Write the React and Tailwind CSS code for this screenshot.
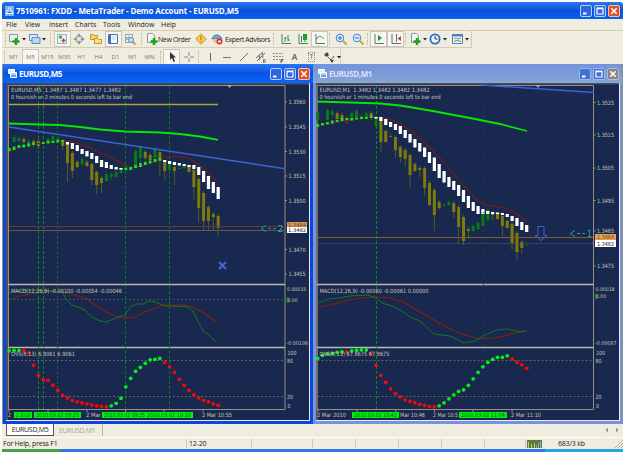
import React from 'react';

const timeframes = ['M1', 'M5', 'M15', 'M30', 'H1', 'H4', 'D1', 'W1', 'MN'];
const menus = [
  { label: 'File', width: 'w-[19px]' },
  { label: 'View', width: 'w-[24px]' },
  { label: 'Insert', width: 'w-[26px]' },
  { label: 'Charts', width: 'w-[28px]' },
  { label: 'Tools', width: 'w-[25px]' },
  { label: 'Window', width: 'w-[33px]' },
  { label: 'Help', width: 'w-[24px]' }
];

const STEP = 4.86;

// Candles: [index, top, bottom, wick end, bullish]
const leftChart = {
  left: 9,
  axis: 285,
  right: 309,
  title: 'EURUSD,M5  1.3487 1.3487 1.3477 1.3482',
  timer: '0 hoursish or 2 minutes 0 seconds left to bar end',
  timerWidth: 121,
  prices: [['1.3560', 102], ['1.3545', 127], ['1.3530', 151.5], ['1.3515', 176], ['1.3500', 200.5], ['1.3470', 249.5], ['1.3455', 274]],
  ma: '9,123.5 40,124.5 60,125 80,127 100,129.5 125,131.5 160,132.5 180,134 200,136.5 218,139.8',
  trend: [9, 127, 285, 168.7],
  band: '9,152 20,147 35,144 50,142 62,140.5 70,141 80,144 90,148 100,153 110,157 118,161 128,166.5 135,167.5 145,165 155,162 160,159 166,157 174,156 184,157 192,160 200,166 208,173 217,181',
  candles: [
    [1, 137, 142, 142, 1], [2, 138, 141, 143, 1], [3, 139, 142, 144, 0], [4, 141, 144, 147, 1], [5, 141, 145, 147, 0], [6, 141, 146, 148, 0], [8, 139, 143, 145, 1], [9, 136, 142, 143, 1],
    [10, 138, 141, 142, 1], [11, 141, 146, 150, 0], [12, 144, 163, 182, 0], [13, 153, 171, 178, 0], [14, 162, 167, 168, 0], [15, 159, 164, 166, 1], [16, 162, 166, 167, 0],
    [17, 164, 180, 185, 0], [18, 172, 185, 194, 0], [19, 178, 183, 193, 0], [20, 174, 181, 182, 1], [21, 174, 177, 180, 1], [22, 172, 177, 178, 1],
    [23, 169, 173, 174, 1], [24, 166, 170, 172, 1], [26, 151, 166, 167, 1], [27, 147, 158, 164, 1], [28, 152, 158, 163, 0], [29, 155, 160, 162, 0], [30, 149, 158, 162, 1], [31, 152, 161, 176, 0],
    [32, 162, 171, 180, 0], [33, 164, 170, 171, 1], [34, 167, 171, 185, 0], [35, 168, 169, 169, 1], [36, 166, 168, 169, 1], [37, 167, 172, 173, 0],
    [38, 170, 187, 200, 0], [39, 179, 208, 223, 0], [40, 193, 221, 231, 0], [41, 207, 221, 231, 0], [42, 214, 217, 230, 0], [43, 216, 228, 237, 0]
  ],
  smoothStart: 12,
  smooth: [
    [142, 144.5], [143, 149], [145, 151], [149, 154], [151, 156.5], [153, 159], [156, 163], [160, 167], [162, 168], [165, 169], [167, 169.5], [168, 169.5],
    null, null, null, null, null, null, null, null, [160, 162], [161, 164], [162, 165], [163, 165.5], [164, 166], [165, 167], [165, 169], [167, 175], [171, 182], [176, 189], [182, 193], [187, 199]
  ],
  greens: [
    [0, 148, 151], [1, 146.5, 150], [2, 145, 148], [3, 144.5, 147.5], [4, 143.5, 146.5], [5, 143, 145], [7, 142, 144], [8, 141, 143.5], [9, 141, 143], [10, 140, 142.5], [11, 140, 142],
    [24, 168, 170], [25, 167, 170], [26, 165, 168], [27, 163, 167], [28, 162, 165], [29, 160.5, 163.5], [30, 159, 162], [31, 158, 160.5]
  ],
  verticals: [[38.5, '#0a8a18'], [43.5, '#0a8a18'], [57.5, '#175f33'], [125.5, '#0a7a20'], [169.5, '#0a7a20']],
  macdTitle: 'MACD(12,26,9) -0.00100 -0.00054 -0.00046',
  macdWidth: 111,
  macdTop: '0.00033',
  macdTopY: 289,
  macdZeroY: 299.5,
  macdLow: '-0.00106',
  macdGreen: '9,293 18,291 40,290 57,291.5 62,291 66,299 72,305 78,307 85,310 92,317 100,321 106,322 113,319 125,315 130,307 137,304 143,304 149,301 155,302 165,306 187,306.5 193,311 196,317 203,331 209,335 216,342',
  macdRed: '11,299 20,296 35,293 50,291 62,292 75,295 87,299 97,306 106,312 115,316 125,318.5 135,317 145,312 155,308 165,305 185,305 195,308 205,314 217,322',
  ossTitle: 'OSS(8,13) 6.9061 6.9061',
  ossWidth: 64,
  oss: [
    350.5, 350, 350, -350, -352.5, -365, -375, -379.5, -380, -385, -390, -395, -397.5, -400, -401.5, -402.5, -403.5, -404.5, -405.5, -406, -406.5,
    405.5, 403, 398, 386.5, 378, 371, 367, 363, 359.5, 359, 358, -362, -366.5, -372, -379, -385, -390, -394.5, -397.5, -400, -401.5, -403.5, -405
  ],
  ticks: [9, 48, 87, 125.5, 164, 203],
  times: [['2', 8, 3], ['2 Mar', 86, 15], ['2 Mar 10:55', 202, 30]],
  marks: [['2 2010', 14, 18], ['2010.03.02 08:25', 34, 47], ['2010.03.02 09:25', 102, 45], ['2010.03.02 10:20', 145, 48]]
};

const rightChart = {
  left: 317.5,
  axis: 593.5,
  right: 618,
  title: 'EURUSD,M1  1.3482 1.3482 1.3482 1.3482',
  timer: '0 hoursish or 1 minutes 0 seconds left to bar end',
  timerWidth: 121,
  prices: [['1.3525', 102.5], ['1.3515', 135], ['1.3505', 168], ['1.3495', 200.5], ['1.3485', 231], ['1.3475', 266]],
  ma: '317,101.5 350,102.5 380,103.5 400,105.5 430,110.5 470,118 500,124 527,131',
  trend: [481, 85, 594, 92.5],
  band: '317,125 340,122 360,118.5 375,116.5 390,119 400,124 415,134 430,148 440,158 450,170 468,190 475,198 480,202 490,206 503,207.5 513,211 522,218 527,222',
  candles: [
    [0, 112, 120, 122, 1], [2, 110, 120, 121, 1], [3, 111, 115, 118, 1], [4, 113, 119, 122, 0], [5, 115, 119, 120, 0], [6, 118, 121, 124, 0], [7, 113, 118, 120, 1], [8, 111, 119, 120, 1], [9, 116, 118, 121, 1], [10, 113, 117, 119, 1], [11, 113, 117, 120, 0],
    [12, 117, 126, 127, 1], [13, 119, 142, 152, 0], [14, 131, 142, 143, 0], [15, 136, 137, 137, 0], [16, 137, 150, 158, 0], [17, 147, 157, 163, 0], [18, 150, 159, 167, 0], [19, 155, 175, 187, 0], [20, 164, 171, 172, 0],
    [21, 168, 170, 177, 0], [22, 168, 188, 196, 0], [23, 183, 205, 206, 0], [24, 190, 215, 231, 0], [25, 202, 208, 210, 0], [26, 205, 206, 206, 1], [27, 202, 205, 206, 1], [28, 203, 212, 218, 0], [29, 207, 227, 244, 0],
    [30, 217, 241, 245, 0], [31, 229, 231, 239, 0], [32, 226, 231, 232, 1], [33, 223, 229, 230, 1], [34, 212, 226, 227, 1], [35, 210, 220, 222, 1], [36, 213, 215, 221, 0], [37, 214, 219, 220, 0], [38, 216, 226, 236, 0],
    [39, 221, 228, 229, 0], [40, 224, 243, 250, 0], [41, 233, 252, 260, 0], [42, 242, 248, 254, 0], [43, 244.5, 245.5, 245, 1]
  ],
  smoothStart: 12,
  smooth: [
    [117, 118.5], [117, 121], [119, 125], [122, 127], [124, 130], [126, 134], [130, 138], [134, 142.5], [139, 147.5], [143, 151.5], [147.5, 157], [152, 163], [157.5, 171], [164, 178], [171, 182.5], [177, 187], [181, 190], [185, 196],
    [190, 202], [196, 208], [202, 211], [206, 214], [209, 214], [211, 214], [212, 214], [212.5, 214], [213, 215], [214, 217], [216, 221], [218, 226], [222, 230], [225, 232]
  ],
  greens: [[0, 124, 127], [1, 123, 125.5], [2, 122, 124.5], [3, 120.5, 123.5], [4, 120, 122], [5, 118, 121], [6, 118, 120], [7, 118, 120.5], [8, 118, 119.5], [9, 117, 119], [10, 117, 119], [11, 115.5, 118]],
  verticals: [[376.5, '#0a8a18']],
  macdTitle: 'MACD(12,26,9) -0.00060 -0.00061 0.00000',
  macdWidth: 109,
  macdTop: '0.00018',
  macdTopY: 289,
  macdZeroY: 296,
  macdLow: '-0.00087',
  macdGreen: '318,303 328,299 340,298 350,296 368,295 376,298 382,303 395,307 405,313 410,317 420,321 434,334 450,336 464,343 475,341 480,338 485,335 497,330 507,329 516,331 520,332 526,331',
  macdRed: '318,307 330,305 345,301 360,298 375,297 390,298 403,302 415,309 434,320 450,329 465,335 480,339 495,338 508,335 518,332 527,331',
  ossTitle: 'OSS(8,13) 67.8675 67.8675',
  ossWidth: 70,
  oss: [
    358, 355, 353.5, 353, 352, 351.5, -351.5, 350.5, 350, 349.5, 349.5, -353, -365, -375, -382, -388.5, -393, -396.5, -399.5, -401, -402.5, -404, -405, -406, -406.5,
    405.5, 402.5, 398.5, 394.5, 391, 389.5, 385, 378.5, 372, 366.5, 362, 359, 357, 357, 355.5, -358.5, -362, -364.5, -368
  ],
  ticks: [318, 357, 396, 434.5, 473, 512],
  times: [['2 Mar 2010', 317, 29], ['Mar 10:46', 400, 25], ['2 Mar 10:5', 433, 25], ['2 Mar 11:10', 511, 30]],
  marks: [['2010.03.02 10:42', 352, 47], ['2010.03.02 11:04', 459, 48]]
};

const Label = ({ x, y, width, children, fill = '#c9c5b6', size = 5.8 }) => (
  <text x={x} y={y} fill={fill} fontSize={size} textLength={width} lengthAdjust="spacingAndGlyphs" style={{ whiteSpace: 'pre' }}>
    {children}
  </text>
);

const Chart = ({ data, origin, children }) => {
  const { left, axis } = data;
  const xAt = (i) => left + 0.2 + STEP * i;

  return (
    <svg width="303" height="337" viewBox={`${origin} 83 303 337`} className="block shrink-0 bg-[#18284f] font-['DejaVu_Sans_Condensed','DejaVu_Sans',sans-serif]">
      {/* Frame */}
      <path d={`M${origin} 83.5H${origin + 303}M${origin + 1} 83V420`} stroke="#4c4f5c" strokeWidth="2" fill="none" />
      <path d={`M${left - 0.5} 409V85.5H${axis}V409.5H${left - 1}`} stroke="#9b8c80" fill="none" />
      <path d={`M${left - 1} 284.5H${axis}M${left - 1} 347.5H${axis}`} stroke="#bdb8ad" strokeWidth="1.7" />

      {data.verticals.map(([x, color]) => (
        <path key={x} d={`M${x} 86V409`} stroke={color} strokeDasharray="3 2" />
      ))}
      <path d={`M${left} 360.5H${axis}M${left} 396.5H${axis}`} stroke="#686654" strokeDasharray="2 2" />

      {/* Candles */}
      {data.candles.map(([i, top, bottom, low, up]) => (
        <g key={i} fill={up ? '#087b12' : '#7e7b08'}>
          <rect x={xAt(i) - 0.5} y={top - 2} width="1" height={low - top + 2} opacity=".6" />
          <rect x={xAt(i) - 1.5} y={top} width="3" height={bottom - top} />
        </g>
      ))}
      <polyline points={data.band} fill="none" stroke="#7e1c12" strokeWidth="1.1" />
      {data.greens.map(([i, top, bottom]) => (
        <rect key={i} x={xAt(i) - 1.4} y={top} width="2.8" height={bottom - top} fill="#12e61c" />
      ))}
      {data.smooth.map((bar, i) => bar && (
        <rect key={i} x={xAt(i + data.smoothStart) - 1.6} y={bar[0]} width="3.2" height={bar[1] - bar[0]} fill="#fff" />
      ))}
      <polyline points={data.ma} fill="none" stroke="#04e804" strokeWidth="1.8" />
      <line x1={data.trend[0]} y1={data.trend[1]} x2={data.trend[2]} y2={data.trend[3]} stroke="#3d62d6" strokeWidth="1.4" />

      {/* MACD */}
      <polyline points={data.macdRed} fill="none" stroke="#85200f" strokeWidth="1.2" />
      <polyline points={data.macdGreen} fill="none" stroke="#13791f" strokeWidth="1" />

      {/* Oscillator dots */}
      {data.oss.map((y, i) => (
        <circle key={i} cx={xAt(i)} cy={Math.abs(y) + 0.3} r="1.9" fill={y > 0 ? '#00f018' : '#f50808'} />
      ))}

      <Label x={left + 2} y="92" width="110">{data.title}</Label>
      <Label x={left + 2} y="98.5" width={data.timerWidth}>{data.timer}</Label>
      <Label x={left + 2} y="293" width={data.macdWidth}>{data.macdTitle}</Label>
      <Label x={left + 2} y="355.5" width={data.ossWidth}>{data.ossTitle}</Label>

      {/* Price scale */}
      {data.prices.map(([price, y]) => (
        <g key={price}>
          <path d={`M${axis} ${y}h2`} stroke="#9b8c80" />
          <Label x={axis + 3.5} y={y + 2.3} width="17">{price}</Label>
        </g>
      ))}
      <Label x={axis + 2} y={data.macdTopY + 2} width="19" size={5.2}>{data.macdTop}</Label>
      <rect x={axis + 1.5} y={data.macdZeroY - 2} width="2.5" height="5" fill="#0c8c22" />
      <Label x={axis + 2.5} y={data.macdZeroY + 2.3} width="10" size={5.2}>0.00</Label>
      <Label x={axis + 1.5} y="344.5" width="21.5" size={5}>{data.macdLow}</Label>
      <Label x={axis + 2.5} y="354.5" width="9">100</Label>
      <Label x={axis + 2} y="362.5" width="6">80</Label>
      <Label x={axis + 2} y="398.5" width="6">20</Label>
      <Label x={axis + 2.5} y="407.5" width="3">0</Label>

      {/* Time scale */}
      {data.ticks.map((x) => (
        <path key={x} d={`M${x} 410v2`} stroke="#9b8c80" />
      ))}
      {data.times.map(([time, x, width]) => (
        <Label key={x} x={x} y="417" width={width}>{time}</Label>
      ))}
      {data.marks.map(([time, x, width]) => (
        <g key={x}>
          <rect x={x} y="412" width={width} height="6" fill="#00f010" />
          <Label x={x + 2} y="417" width={width - 4} fill="#07590f">{time}</Label>
        </g>
      ))}
      <path d={`M${axis - 58} 85h5l-2.5 3z`} fill="#a8aaaa" />
      {children}
    </svg>
  );
};

const WindowButtons = ({ inactive }) => (
  <div className="flex gap-[2px]">
    {['min', 'max', 'close'].map((kind) => {
      let color = inactive ? 'bg-[#3f70d2] border-[#9db9ec]' : 'bg-[#2c66e2] border-[#b9cdf8]';
      if (kind === 'close') color = inactive ? 'bg-[#86868a] border-[#b9bcc8]' : 'bg-[#df5027] border-[#f3c2b0]';
      return (
        <div key={kind} className={`w-[12px] h-[12px] ${color} border rounded-[2px]`}>
          <svg viewBox="0 0 10 10" className="block w-full h-full" stroke="#fff" strokeWidth="1.6" fill="none">
            {kind === 'min' && <path d="M2 7.5h3.5" strokeWidth="2" />}
            {kind === 'max' && <path d="M2 2h6v6H2zM2 2.6h6" strokeWidth="1.2" />}
            {kind === 'close' && <path d="M2.3 2.3l5.4 5.4M7.7 2.3L2.3 7.7" />}
          </svg>
        </div>
      );
    })}
  </div>
);

const WindowIcon = () => (
  <svg width="9" height="9" viewBox="0 0 9 9" className="block">
    <path d="M.5.5h6v4h-6z" fill="#dbe8ff" stroke="#fff" />
    <path d="M2.5 3.5h6v5h-6z" fill="#6c9ae8" stroke="#fff" />
    <path d="M3 5h5" stroke="#fff" />
  </svg>
);

const Grip = () => <div className="w-[2px] h-[12px] border-l border-dotted border-[#b8b29c] mx-[1px]" />;

const Cell = ({ width = 'w-[17px]', active, children }) => (
  <div className={`${width} h-[16px] shrink-0 flex items-center justify-center ${active ? 'bg-[#f7f6f0] border border-[#cbc7b8]' : ''}`}>
    {children}
  </div>
);

const Icon = ({ children, w = 12 }) => (
  <svg width={w} height="12" viewBox={`0 0 ${w} 12`} fill="none" className="shrink-0">{children}</svg>
);

const Arrow = () => <path d="M14 5h4l-2 2.5z" fill="#222" />;
const Plus = () => <path d="M8 5v7M4.5 8.5h7" stroke="#18a51c" strokeWidth="2.4" />;

const Toolbar = () => (
  <div className="flex items-center h-[17px] w-[470px] pl-[2px] border-b border-r border-[#d5cdb9]">
    <Grip />
    <Cell width="w-[20px]"><Icon w={19}><path d="M1.5 1.5h8v7h-8z" fill="#e9f0ee" stroke="#8796a0" /><Plus /><Arrow /></Icon></Cell>
    <Cell width="w-[20px]"><Icon w={19}><path d="M1.5 1.5h8v6h-8z" fill="#dfeafb" stroke="#5d8acb" /><path d="M4 4.5h8v6h-8z" fill="#bdd4f4" stroke="#5d8acb" /><Arrow /></Icon></Cell>
    <Cell width="w-[6px]"><Grip /></Cell>
    <Cell active><Icon><path d="M1.5 1.5h9v9h-9z" fill="#e5eef8" stroke="#8eb1cc" /><path d="M3 4h3M4.5 2.5v3" stroke="#2a9a32" strokeWidth="1.5" /><path d="M5.5 7.500h4M7.500 5.500v4" stroke="#d23c30" strokeWidth="1.5" /></Icon></Cell>
    <Cell><Icon><circle cx="6" cy="6" r="3.5" stroke="#808488" /><path d="M6 .5v4M6 7.5v4M.5 6h4M7.5 6h4" stroke="#72767a" /></Icon></Cell>
    <Cell><Icon><path d="M.5 1.5h3l1 1h3v4h-7z" fill="#f5d564" stroke="#c49a2a" /><path d="M4.5 5.5h3l1 1h3v4h-7z" fill="#f9df7c" stroke="#c49a2a" /></Icon></Cell>
    <Cell active><Icon><path d="M1.5 1.5h9v9h-9z" fill="#f4f8ff" stroke="#4370b5" /><path d="M3 2v8" stroke="#4370b5" strokeWidth="2" /><path d="M5 4h4M5 6h4" stroke="#bcd0ea" /></Icon></Cell>
    <Cell><Icon><path d="M1.5 1.5h7v8h-7z" fill="#edf1f3" stroke="#91a4b3" /><path d="M3 7V4M5 6V3" stroke="#6684a5" /><circle cx="7" cy="7" r="2.5" fill="#cfe0f4" stroke="#6685b8" /><path d="M9 9l2.5 2.5" stroke="#b4893a" strokeWidth="1.5" /></Icon></Cell>
    <Cell width="w-[6px]"><Grip /></Cell>
    <div className="flex items-center w-[50px] h-[16px] pl-[1px] text-[7px] tracking-[-0.35px] whitespace-nowrap text-[#222]">
      <Icon w={12}><path d="M1.5.5h5l2 2v7h-7z" fill="#f4f6f3" stroke="#8c9899" /><path d="M8 5v7M4.5 8.5h7" stroke="#18a51c" strokeWidth="2.5" /></Icon>
      New Order
    </div>
    <Cell width="w-[17px]"><Icon><path d="M6 .8L11.2 6 6 11.2.8 6z" fill="#f8cf50" stroke="#c99126" /><path d="M6 3v4M6 8v1" stroke="#8d6414" /></Icon></Cell>
    <div className="flex items-center w-[63px] h-[16px] gap-[2px] pl-[2px] text-[7px] tracking-[-0.38px] whitespace-nowrap text-[#222]">
      <Icon><path d="M1 5Q5-1 10 4l1 2H1z" fill="#68a4df" stroke="#3972b3" strokeWidth=".7" /><path d="M2 6h6v4H3z" fill="#edc56d" /><circle cx="8.5" cy="8.5" r="3" fill="#dc3024" /><path d="M7.2 7.5h2.5v2H7.2z" fill="#fff" /></Icon>
      Expert Advisors
    </div>
    <Cell width="w-[7px]"><Grip /></Cell>
    <Cell><Icon><path d="M2 1v9.5h9" stroke="#5c7663" /><path d="M5 4v5M8 2v6M5 5h1.5M8 7h2" stroke="#279640" /></Icon></Cell>
    <Cell><Icon><path d="M2 1v9.5h9" stroke="#5c7663" /><path d="M4.5 3v6" stroke="#4b7c53" /><path d="M6 1h4v6H6zM7.500 7h1v2h-1z" fill="#16a62c" /></Icon></Cell>
    <Cell active><Icon><path d="M2 1v9.5h9" stroke="#5c7663" /><path d="M2 7Q5 0 10 6" stroke="#45985a" /></Icon></Cell>
    <Cell width="w-[4px]"><Grip /></Cell>
    <Cell><Icon><circle cx="5" cy="5" r="3.8" fill="#d9ebfc" stroke="#4a80cc" /><path d="M3 5h4M5 3v4" stroke="#2668c0" /><path d="M8 8l3.5 3.5" stroke="#d1a13a" strokeWidth="2" /></Icon></Cell>
    <Cell><Icon><circle cx="5" cy="5" r="3.8" fill="#d9ebfc" stroke="#4a80cc" /><path d="M3 5h4" stroke="#2668c0" /><path d="M8 8l3.5 3.5" stroke="#d1a13a" strokeWidth="2" /></Icon></Cell>
    <Cell width="w-[4px]"><Grip /></Cell>
    <Cell active><Icon><path d="M2 1v9.5h9" stroke="#5c7663" /><path d="M5 2l4 3-4 3z" fill="#15a32b" /></Icon></Cell>
    <Cell active><Icon><path d="M2 1v9.5h9M6.5 1v8" stroke="#566f87" /><path d="M11 3L7.5 5.5 11 8z" fill="#c64136" /></Icon></Cell>
    <Cell width="w-[4px]"><Grip /></Cell>
    <Cell width="w-[20px]"><Icon w={19}><path d="M2.5.5h5l2 2v7h-7z" fill="#f4f6f3" stroke="#8c9899" /><Plus /><Arrow /></Icon></Cell>
    <Cell width="w-[21px]"><Icon w={19}><circle cx="6" cy="6" r="4.6" fill="#eef5ff" stroke="#2f6ccb" strokeWidth="1.8" /><path d="M6 3v3h2.5" stroke="#333" /><Arrow /></Icon></Cell>
    <Cell width="w-[22px]"><Icon w={19}><path d="M1.5 1.5h10v9h-10z" fill="#f2f7fd" stroke="#4d82c2" /><path d="M1 2.5h11" stroke="#4d82c2" strokeWidth="2" /><path d="M3 6l2-1 2 1 3-1" stroke="#c86c4a" /><path d="M3 8.5l3-1 4 1" stroke="#4f9560" /><Arrow /></Icon></Cell>
  </div>
);

const LineToolbar = () => (
  <div className="flex items-center h-[17px] w-[339px] pl-[2px] border-r border-[#d5cdb9] text-[6px] text-[#77756d]">
    <Cell width="w-[1px]"><Grip /></Cell>
    {timeframes.map((tf) => (
      <Cell key={tf} active={tf === 'M5'}>{tf}</Cell>
    ))}
    <Cell width="w-[5px]"><Grip /></Cell>
    <Cell active><Icon><path d="M4 1v8l2-2 1.5 4 1.5-.7L7.5 6.5H10z" fill="#333" /></Icon></Cell>
    <Cell><Icon><path d="M6 1v4M6 7v4M1 6h4M7 6h4" stroke="#858585" /></Icon></Cell>
    <Cell width="w-[4px]"><Grip /></Cell>
    <Cell><Icon><path d="M6.5 2v8" stroke="#666" /></Icon></Cell>
    <Cell><Icon><path d="M2 6.5h8" stroke="#777" /></Icon></Cell>
    <Cell><Icon><path d="M2 10l8-8" stroke="#777" /></Icon></Cell>
    <Cell><Icon><path d="M1 7l7-6M2 10l8-8M4 4l1 5M7 2l1 5M8 9h3M8 11h3M8.5 8.5v3" stroke="#6b6b6b" /></Icon></Cell>
    <Cell><Icon><path d="M1 2.5h10M1 5.5h10M1 8.5h7" stroke="#888" strokeDasharray="2 1" /><path d="M9 12V8.5h2.5M9 10h2" stroke="#555" /></Icon></Cell>
    <Cell><span className="text-[8px] font-bold text-[#666]">A</span></Cell>
    <Cell><span className="text-[7px] leading-[8px] px-[1px] border border-dotted border-[#888] text-[#555]">T</span></Cell>
    <Cell width="w-[24px]"><Icon w={19}><path d="M1 4l3-3 2 3-2 2z" fill="#444" /><path d="M5 6l3 3 3-4" stroke="#555" /><path d="M7 9l2 3 2-3z" fill="#444" /><Arrow /></Icon></Cell>
  </div>
);

const ChartWindow = ({ title, inactive, children }) => (
  <div className={`flex flex-col h-[360px] ${inactive ? 'w-[309px] bg-[#7792df]' : 'w-[310px] bg-[#0b46d6]'}`}>
    <div className={`flex items-center h-[19px] pl-[5px] pr-[3px] shrink-0 ${inactive ? 'bg-linear-to-b from-[#7393df] via-[#7a9ad4] to-[#86a7d8]' : 'bg-linear-to-b from-[#2875f5] via-[#0853e3] to-[#0868fb]'}`}>
      <WindowIcon />
      <span className={`flex-1 ml-[2px] text-[8px] font-bold tracking-[-0.4px] whitespace-nowrap ${inactive ? 'text-[#d7e3f8]' : 'text-white'}`}>{title}</span>
      <WindowButtons inactive={inactive} />
    </div>
    <div className="flex ml-[3px] border-b border-r border-[#e4ebff] w-[304px] h-[338px]">{children}</div>
  </div>
);

const App = () => (
  <div className="w-[625px] h-[452px] overflow-hidden bg-white pt-[2px] px-[2px] font-['Open_Sans',sans-serif] leading-none">
    <div className="flex items-center h-[17px] px-[3px] bg-linear-to-b from-[#2b78ee] via-[#0b50d9] to-[#0661f5] rounded-t-[3px]">
      <svg width="9" height="10" viewBox="0 0 9 10" className="block">
        <path d="M0 0h9v10H0z" fill="#79b3f4" />
        <path d="M4.5 1.5L1 7.5h7zM2.5 5h4" fill="#2f70cf" stroke="#fff" />
      </svg>
      <span className="flex-1 ml-[2px] text-[8px] font-bold tracking-[-0.14px] text-white whitespace-nowrap">7510961: FXDD - MetaTrader - Demo Account - EURUSD,M5</span>
      <WindowButtons />
    </div>

    <div className="h-[45px] bg-[#efede0]">
      <div className="flex items-center h-[12px] pl-[4px] text-[7px] text-[#222] border-b border-[#d3cab8]">
        {menus.map((menu) => (
          <span key={menu.label} className={`${menu.width} shrink-0 whitespace-nowrap`}>{menu.label}</span>
        ))}
      </div>
      <Toolbar />
      <LineToolbar />
    </div>

    <div className="flex h-[360px] pl-[1px] bg-[#8d8c87]">
      <ChartWindow title="EURUSD,M5">
        <Chart data={leftChart} origin={6}>
          <path d="M9 104.5H218" stroke="#a9a43e" strokeWidth="1.6" />
          <path d="M9 299.5H285" stroke="#3c5550" strokeDasharray="2 2" />
          <path d="M9 226.5H285" stroke="#71352d" />
          <path d="M9 230.5H285" stroke="#56614c" />
          <path d="M266 225.5l-5 3 5 3M268 228.5h3M273 228.5h3" stroke="#239d98" fill="none" />
          <Label x="277.5" y="231.5" width="6" size={8} fill="#30aba4">2</Label>
          <rect x="287" y="222" width="20" height="5.500" fill="#d49452" />
          <Label x="288" y="226.5" width="18" size={5} fill="#7b3f16">1.3484</Label>
          <rect x="287" y="227" width="20" height="6" fill="#fff" />
          <Label x="288" y="232.3" width="18" size={5.2} fill="#222">1.3482</Label>
          <path d="M219 262l7 7M226 262l-7 7" stroke="#4169dc" strokeWidth="2" />
        </Chart>
      </ChartWindow>
      <ChartWindow title="EURUSD,M1" inactive>
        <Chart data={rightChart} origin={316}>
          <path d="M483.5 86V409" stroke="#30563a" strokeDasharray="1 5" />
          <path d="M318 237.5H593" stroke="#8a6020" />
          <path d="M318 243.5H593" stroke="#56595a" strokeDasharray="1 1" />
          <path d="M575 230.5l-5 3 5 3M577 233.5h3M582 233.5h3" stroke="#239d98" fill="none" />
          <Label x="587" y="236.5" width="5" size={8} fill="#30aba4">1</Label>
          <path d="M538 226.5h6v9h3l-6 5-6-5h3z" stroke="#3c60d0" fill="none" />
          <rect x="595" y="234" width="21" height="6" fill="#e0a158" />
          <Label x="597" y="239.3" width="17" size={5.4} fill="#6e4b0d">1.3484</Label>
          <rect x="595" y="240" width="21" height="7" fill="#fff" />
          <Label x="597" y="245.8" width="17" size={5.4} fill="#222">1.3482</Label>
        </Chart>
      </ChartWindow>
    </div>

    <div className="flex items-start h-[13px] pl-[4px] bg-[#efede0] text-[7px]">
      <div className="w-[48px] h-[12px] flex items-center justify-center bg-white border border-t-0 border-[#555] text-[#222] tracking-[-0.3px]">EURUSD,M5</div>
      <div className="w-[49px] h-[12px] flex items-center pl-[5px] border-r border-[#bbb6a5] text-[#aaa698] tracking-[-0.35px]">EURUSD,M1</div>
      <div className="flex-1 flex justify-end items-center h-[12px] pr-[4px]">
        <svg width="14" height="6" viewBox="0 0 14 6" fill="#99968c"><path d="M3 .5v5L.5 3zM11 .5v5L13.5 3z" /></svg>
      </div>
    </div>

    <div className="flex items-center h-[12px] bg-[#efede0] border-t border-[#fffef8] text-[7px] text-[#222] whitespace-nowrap">
      <div className="w-[184px] pl-[1px] tracking-[-0.22px]">For Help, press F1</div>
      <div className="w-[66px] h-[9px] pl-[2px] flex items-center border-x border-[#cdc9ba] tracking-[-0.2px]">12-20</div>
      <div className="w-[61px] h-[9px] border-r border-[#cdc9ba]" />
      <div className="w-[43px] h-[9px] border-r border-[#cdc9ba]" />
      <div className="w-[43px] h-[9px] border-r border-[#cdc9ba]" />
      <div className="w-[43px] h-[9px] border-r border-[#cdc9ba]" />
      <div className="w-[43px] h-[9px] border-r border-[#cdc9ba]" />
      <div className="w-[41px] h-[9px] border-r border-[#cdc9ba]" />
      <div className="flex-1 flex items-center pl-[1px] gap-[16px] tracking-[-0.2px]">
        <svg width="15" height="8" viewBox="0 0 15 8">
          <path d="M0 0h15v8H0z" fill="#63793a" />
          <path d="M1.5 8V2M4.5 8V4M7.5 8V3" stroke="#b6d069" />
          <path d="M9.5 8V5M11.5 8V3M13.5 8V1" stroke="#72b4cf" />
        </svg>
        <span>683/3 kb</span>
      </div>
      <svg width="9" height="9" viewBox="0 0 9 9" stroke="#b5b09f"><path d="M1 9l8-8M4 9l5-5M7 9l2-2" /></svg>
    </div>

    <div className="flex h-[3px]">
      <div className="w-[58px] bg-[#46a04a]" />
      <div className="flex-1 bg-[#2f78e4]" />
      <div className="w-[78px] bg-[#27a3e4]" />
    </div>
  </div>
);

export default App;
